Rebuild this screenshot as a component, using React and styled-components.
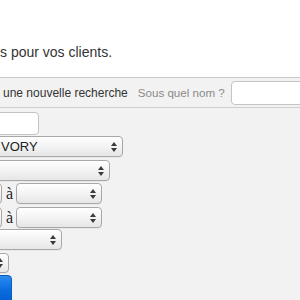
import React from "react";
import styled, { createGlobalStyle } from "styled-components";

const GlobalStyle = createGlobalStyle`
  html, body {
    margin: 0;
    padding: 0;
    background: #ffffff;
    overflow: hidden;
    font-family: "Liberation Sans", Arial, Helvetica, sans-serif;
  }
`;

const Page = styled.div`
  width: 300px;
  height: 300px;
  overflow: hidden;
`;

const Intro = styled.div`
  height: 77px;
  box-sizing: border-box;
  padding-top: 44px;
  font-size: 14px;
  line-height: 16px;
  color: #333333;
  white-space: nowrap;
`;

const Panel = styled.div`
  background: #f2f2f2;
  border-top: 1px solid #c9c9c9;
  height: 223px;
`;

const SearchBar = styled.div`
  display: flex;
  align-items: center;
  height: 29px;
  border-bottom: 1px solid #cfcfcf;
  white-space: nowrap;
`;

const BarLink = styled.span`
  font-size: 12px;
  color: #333333;
  padding-left: 3px;
`;

const BarLabel = styled.span`
  font-size: 11.6px;
  color: #8a8a8a;
  margin-left: 10px;
`;

const TextInput = styled.div`
  box-sizing: border-box;
  height: ${(p) => p.$h || 24}px;
  width: ${(p) => p.$w}px;
  flex-shrink: 0;
  background: #ffffff;
  border: 1px solid #c4c4c4;
  border-radius: 4px;
  margin-left: ${(p) => p.$ml || 0}px;
`;

const Fields = styled.div`
  display: flex;
  flex-direction: column;
  margin-left: -60px;
  padding-top: 4px;
`;

const Row = styled.div`
  display: flex;
  align-items: flex-start;
  height: ${(p) => p.$h}px;
  white-space: nowrap;
`;

const Select = styled.div`
  box-sizing: border-box;
  display: flex;
  align-items: center;
  justify-content: space-between;
  width: ${(p) => p.$w}px;
  height: ${(p) => p.$h || 21}px;
  flex-shrink: 0;
  padding: 0 5px 0 ${(p) => p.$indent || 6}px;
  border: 1px solid #a8a8a8;
  border-radius: 4px;
  background: linear-gradient(#ffffff, #f3f3f3 50%, #e6e6e6);
  box-shadow: 0 1px 0 rgba(0, 0, 0, 0.04);
  font-size: 13px;
  color: #222222;
`;

const To = styled.span`
  font-family: "Liberation Serif", "Times New Roman", serif;
  font-size: 16px;
  color: #222222;
  width: 14px;
  padding-left: 4px;
  box-sizing: border-box;
  line-height: 21px;
`;

const Submit = styled.div`
  width: 72px;
  height: 32px;
  border-radius: 4px;
  background: linear-gradient(#2a8cf0, #0a6ee0 45%, #0058cc);
  border: 1px solid #0a5cbc;
  box-sizing: border-box;
`;

function Arrows() {
  return (
    <svg width="6" height="10" viewBox="0 0 6 10">
      <polygon points="3,0 6,4 0,4" fill="#3a3a3a" />
      <polygon points="0,6 6,6 3,10" fill="#3a3a3a" />
    </svg>
  );
}

function Dropdown({ w, h, value, indent }) {
  return (
    <Select $w={w} $h={h} $indent={indent}>
      <span>{value}</span>
      <Arrows />
    </Select>
  );
}

export default function App() {
  return (
    <Page>
      <GlobalStyle />
      <Intro>s pour vos clients.</Intro>
      <Panel>
        <SearchBar>
          <BarLink>une nouvelle recherche</BarLink>
          <BarLabel>Sous quel nom ?</BarLabel>
          <TextInput $w={90} $ml={6} />
        </SearchBar>
        <Fields>
          <Row $h={24}>
            <TextInput $w={99} $h={23} />
          </Row>
          <Row $h={24}>
            <Dropdown w={183} value="VORY" indent={60} />
          </Row>
          <Row $h={23}>
            <Dropdown w={170} />
          </Row>
          <Row $h={24}>
            <Dropdown w={62} />
            <To>à</To>
            <Dropdown w={86} />
          </Row>
          <Row $h={22}>
            <Dropdown w={62} />
            <To>à</To>
            <Dropdown w={86} />
          </Row>
          <Row $h={24}>
            <Dropdown w={122} />
          </Row>
          <Row $h={22}>
            <Dropdown w={69} h={20} />
          </Row>
          <Row $h={32}>
            <Submit />
          </Row>
        </Fields>
      </Panel>
    </Page>
  );
}
